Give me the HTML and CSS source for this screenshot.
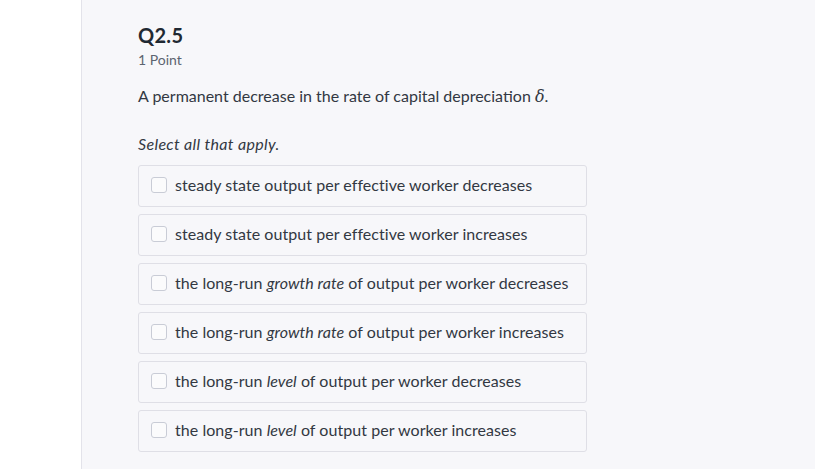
FILE: index.html
```html
<!DOCTYPE html>
<html lang="en">
<head>
<meta charset="utf-8">
<title>Q2.5</title>
<link rel="stylesheet" href="styles.css">
</head>
<body>
<div class="page">
  <aside class="side"></aside>
  <main class="main">
    <section class="question">
      <h2 class="q-title">Q2.5</h2>
      <div class="q-points">1 Point</div>
      <p class="q-text">A permanent decrease in the rate of capital depreciation <span class="math">δ</span>.</p>
      <p class="q-hint">Select all that apply.</p>
      <ul class="options">
        <li class="option"><span class="box"></span><span class="label">steady state output per effective worker decreases</span></li>
        <li class="option"><span class="box"></span><span class="label">steady state output per effective worker increases</span></li>
        <li class="option"><span class="box"></span><span class="label">the long-run <em>growth rate</em> of output per worker decreases</span></li>
        <li class="option"><span class="box"></span><span class="label">the long-run <em>growth rate</em> of output per worker increases</span></li>
        <li class="option"><span class="box"></span><span class="label">the long-run <em>level</em> of output per worker decreases</span></li>
        <li class="option"><span class="box"></span><span class="label">the long-run <em>level</em> of output per worker increases</span></li>
      </ul>
    </section>
  </main>
</div>
</body>
</html>
```
FILE: styles.css
```css
* { box-sizing: border-box; }
html, body { margin: 0; padding: 0; height: 100%; }
body {
  font-family: "Lato", "Open Sans", sans-serif;
  color: #323842;
  background: #f7f7fa;
  overflow: hidden;
}
.page {
  display: flex;
  height: 469px;
}
.side {
  width: 82px;
  flex: none;
  background: #ffffff;
  border-right: 1px solid #e3e3ea;
}
.main {
  flex: 1;
  background: #f7f7fa;
  padding: 23px 0 0 56px;
}
.question {
  width: 449px;
}
.q-title {
  margin: 0;
  font-size: 20px;
  font-weight: 700;
  color: #1f2933;
  line-height: 24px;
  letter-spacing: 0.3px;
}
.q-points {
  font-size: 14px;
  color: #5c6470;
  line-height: 20px;
  margin-top: 3px;
}
.q-text {
  margin: 15px 0 0;
  font-size: 16px;
  line-height: 22px;
}
.math {
  font-family: "DejaVu Serif", "Liberation Serif", serif;
  font-style: italic;
  color: inherit;
}
.q-hint {
  margin: 25px 0 0;
  font-size: 16px;
  line-height: 22px;
  font-style: italic;
  letter-spacing: 0.35px;
}
.options {
  list-style: none;
  margin: 10px 0 0;
  padding: 0;
  display: flex;
  flex-direction: column;
  gap: 7px;
}
.option {
  display: flex;
  align-items: center;
  height: 42px;
  border: 1px solid #dfdfe6;
  border-radius: 3px;
  padding: 0 0 3px 12px;
  font-size: 16px;
  letter-spacing: 0.05px;
}
.box {
  width: 16px;
  height: 16px;
  border: 1px solid #c9ccd6;
  border-radius: 3px;
  background: #fbfbfc;
  margin-right: 8px;
  flex: none;
}
.label em { font-style: italic; }
```
